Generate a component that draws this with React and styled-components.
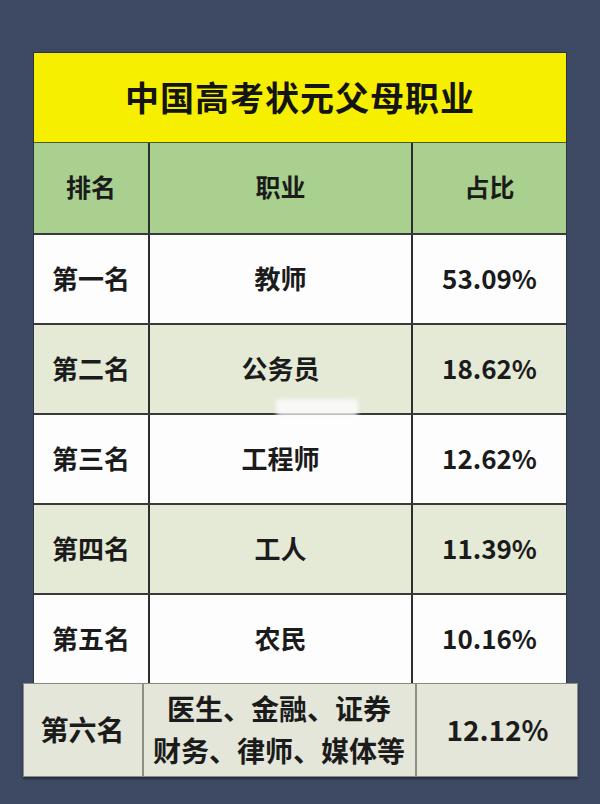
import React from 'react';
import styled, {createGlobalStyle} from 'styled-components';

const GlobalStyle = createGlobalStyle`
	* {
		box-sizing: border-box;
	}

	body {
		margin: 0;
		background: #3e4a63;
		font-family: 'Noto Sans CJK SC', 'Noto Sans', sans-serif;
	}
`

const Page = styled.div`
	position: relative;
	min-height: 804px;
	padding-top: 53px;
	display: flex;
	flex-direction: column;
	align-items: center;
	background: #3e4a63;
`

const Table = styled.div`
	width: 532px;
	display: flex;
	flex-direction: column;
	box-shadow: 0 0 0 1px #2c3446;
`

const TitleBar = styled.div`
	height: 90px;
	padding-bottom: 2px;
	display: flex;
	justify-content: center;
	align-items: center;
	background: #f6f000;
	border-bottom: 1px solid #4a5a2c;
	font-size: 34px;
	font-weight: 700;
	color: #141414;
	letter-spacing: 1px;
`

const Row = styled.div`
	height: ${props => props.height || 90}px;
	display: grid;
	grid-template-columns: 114px 263px 155px;
	background: ${props => props.bg};
	border-top: ${props => props.first ? 'none' : '2px solid #3a3a3a'};
`

const Cell = styled.div`
	padding-bottom: 4px;
	display: flex;
	justify-content: center;
	align-items: center;
	border-left: ${props => props.divider ? '2px solid #2e2e2e' : 'none'};
	font-size: ${props => props.size || 26}px;
	font-weight: 700;
	color: #1b1b1b;
	text-align: center;
`

const LastRow = styled.div`
	width: 555px;
	height: 94px;
	display: grid;
	grid-template-columns: 118px 273px 164px;
	background: #e3e6d8;
	border: 1px solid #8a8c84;
	box-shadow: 0 2px 2px rgba(20, 24, 34, 0.6);
`

const LastCell = styled.div`
	padding-bottom: 3px;
	display: flex;
	flex-direction: column;
	justify-content: center;
	align-items: center;
	border-left: ${props => props.divider ? '2px solid #8d8f88' : 'none'};
	font-size: 28px;
	font-weight: 700;
	color: #1b1b1b;
	line-height: 42px;
`

const Smudge = styled.div`
	position: absolute;
	left: 276px;
	top: 399px;
	width: 82px;
	height: 17px;
	background: rgba(250, 250, 250, 0.9);
	filter: blur(2px);
	border-radius: 4px;
`

const rows = [
	{rank: '第一名', job: '教师', pct: '53.09%', bg: '#fdfdfd'},
	{rank: '第二名', job: '公务员', pct: '18.62%', bg: '#e4ead6'},
	{rank: '第三名', job: '工程师', pct: '12.62%', bg: '#fdfdfd'},
	{rank: '第四名', job: '工人', pct: '11.39%', bg: '#e4ead6'},
	{rank: '第五名', job: '农民', pct: '10.16%', bg: '#fdfdfd'},
];

const App = () => {
	return (
		<Page>
			<GlobalStyle/>
			<Table>
				<TitleBar>中国高考状元父母职业</TitleBar>
				<Row first bg='#a9d08f'>
					<Cell size={25}>排名</Cell>
					<Cell size={25} divider>职业</Cell>
					<Cell size={25} divider>占比</Cell>
				</Row>
				{rows.map(row => (
					<Row key={row.rank} bg={row.bg}>
						<Cell>{row.rank}</Cell>
						<Cell divider>{row.job}</Cell>
						<Cell divider>{row.pct}</Cell>
					</Row>
				))}
			</Table>
			<LastRow>
				<LastCell>第六名</LastCell>
				<LastCell divider>
					<span>医生、金融、证券</span>
					<span>财务、律师、媒体等</span>
				</LastCell>
				<LastCell divider>12.12%</LastCell>
			</LastRow>
			<Smudge/>
		</Page>
	);
};

export default App;
